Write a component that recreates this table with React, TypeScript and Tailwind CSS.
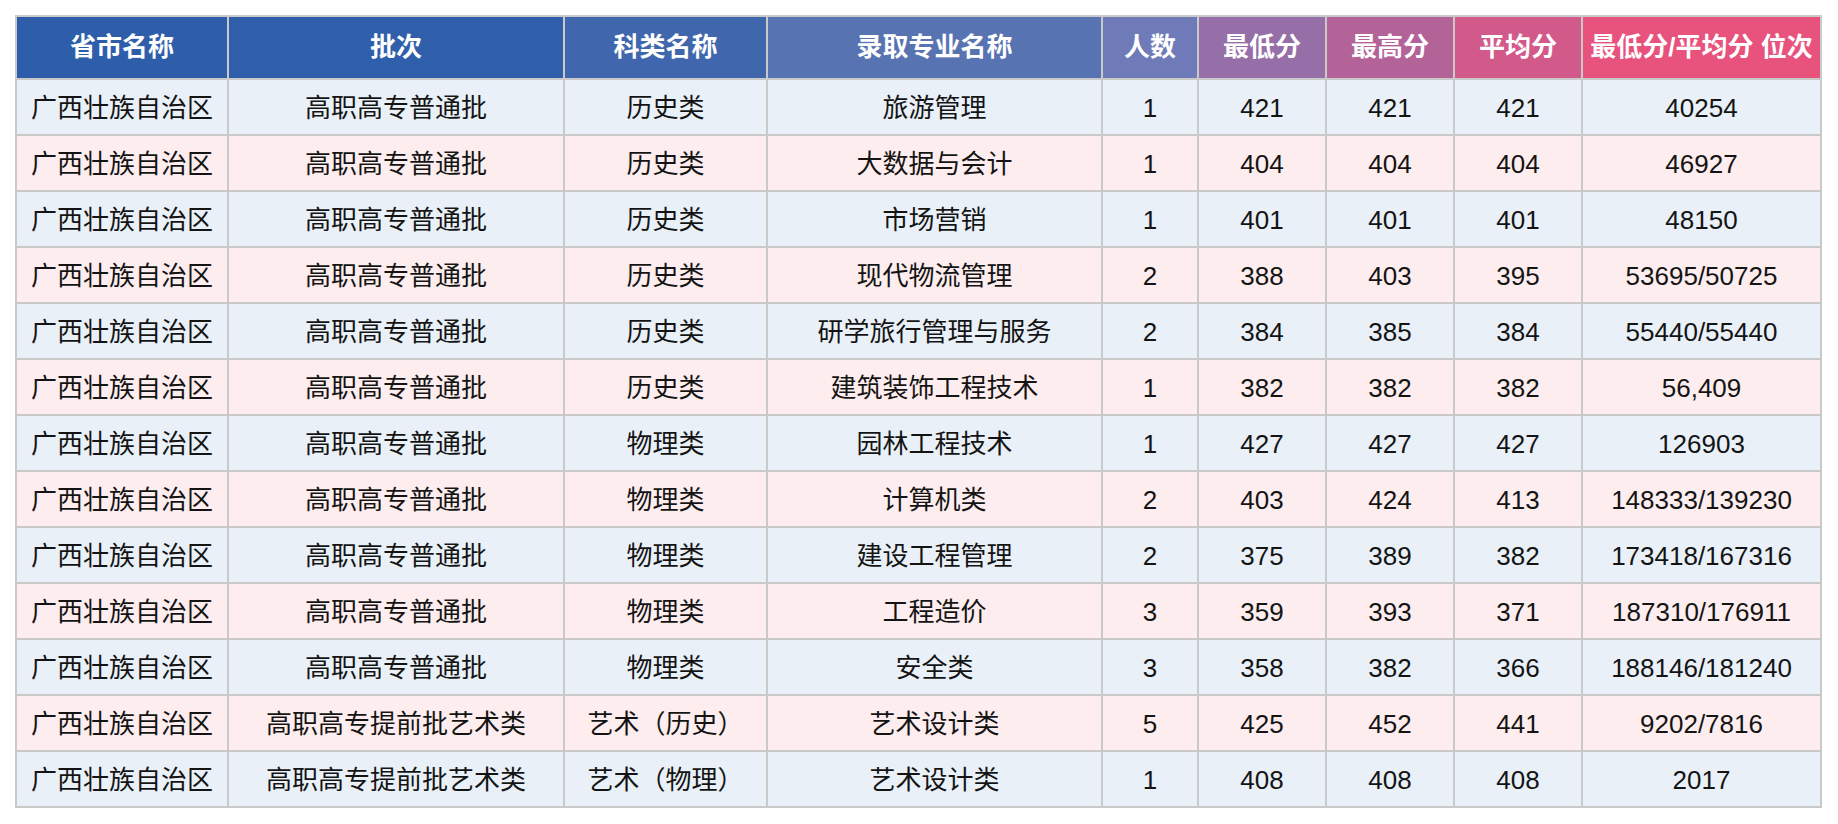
import React from 'react';

const headers = [
  { label: '省市名称', bg: 'bg-[#2e5eaa]' },
  { label: '批次', bg: 'bg-[#2f5eaa]' },
  { label: '科类名称', bg: 'bg-[#4066ad]' },
  { label: '录取专业名称', bg: 'bg-[#5873b2]' },
  { label: '人数', bg: 'bg-[#6f7bb8]' },
  { label: '最低分', bg: 'bg-[#966ea8]' },
  { label: '最高分', bg: 'bg-[#b46399]' },
  { label: '平均分', bg: 'bg-[#d25a8b]' },
  { label: '最低分/平均分 位次', bg: 'bg-[#e8537e]' },
];

const widths = ['w-[212px]', 'w-[336px]', 'w-[203px]', 'w-[335px]', 'w-[96px]', 'w-[128px]', 'w-[128px]', 'w-[128px]', 'w-[239px]'];

const rows = [
  ['高职高专普通批', '历史类', '旅游管理', '1', '421', '421', '421', '40254'],
  ['高职高专普通批', '历史类', '大数据与会计', '1', '404', '404', '404', '46927'],
  ['高职高专普通批', '历史类', '市场营销', '1', '401', '401', '401', '48150'],
  ['高职高专普通批', '历史类', '现代物流管理', '2', '388', '403', '395', '53695/50725'],
  ['高职高专普通批', '历史类', '研学旅行管理与服务', '2', '384', '385', '384', '55440/55440'],
  ['高职高专普通批', '历史类', '建筑装饰工程技术', '1', '382', '382', '382', '56,409'],
  ['高职高专普通批', '物理类', '园林工程技术', '1', '427', '427', '427', '126903'],
  ['高职高专普通批', '物理类', '计算机类', '2', '403', '424', '413', '148333/139230'],
  ['高职高专普通批', '物理类', '建设工程管理', '2', '375', '389', '382', '173418/167316'],
  ['高职高专普通批', '物理类', '工程造价', '3', '359', '393', '371', '187310/176911'],
  ['高职高专普通批', '物理类', '安全类', '3', '358', '382', '366', '188146/181240'],
  ['高职高专提前批艺术类', '艺术（历史）', '艺术设计类', '5', '425', '452', '441', '9202/7816'],
  ['高职高专提前批艺术类', '艺术（物理）', '艺术设计类', '1', '408', '408', '408', '2017'],
];

export default function App() {
  return (
    <div className="w-[1838px] h-[824px] bg-white pt-[15px] pl-[15px] font-['Liberation_Sans','Noto_Sans_CJK_SC',sans-serif]">
      <table className="table-fixed border-collapse w-[1807px] text-[26px] text-[#141414]">
        <colgroup>
          {widths.map((w, i) => (
            <col key={i} className={w} />
          ))}
        </colgroup>
        <thead>
          <tr className="h-[63px]">
            {headers.map((h) => (
              <th
                key={h.label}
                className={`${h.bg} border-2 border-[#c9c9c9] text-white font-bold text-center align-middle p-0 whitespace-nowrap`}
              >
                {h.label}
              </th>
            ))}
          </tr>
        </thead>
        <tbody>
          {rows.map((r, i) => (
            <tr key={i} className={`h-[56px] ${i % 2 === 0 ? 'bg-[#e9f0f8]' : 'bg-[#fdedee]'}`}>
              <td className="border-2 border-[#c9c9c9] text-center align-middle p-0 pt-[3px]">广西壮族自治区</td>
              {r.map((c, j) => (
                <td key={j} className="border-2 border-[#c9c9c9] text-center align-middle p-0 pt-[3px] whitespace-nowrap">
                  {c}
                </td>
              ))}
            </tr>
          ))}
        </tbody>
      </table>
    </div>
  );
}
